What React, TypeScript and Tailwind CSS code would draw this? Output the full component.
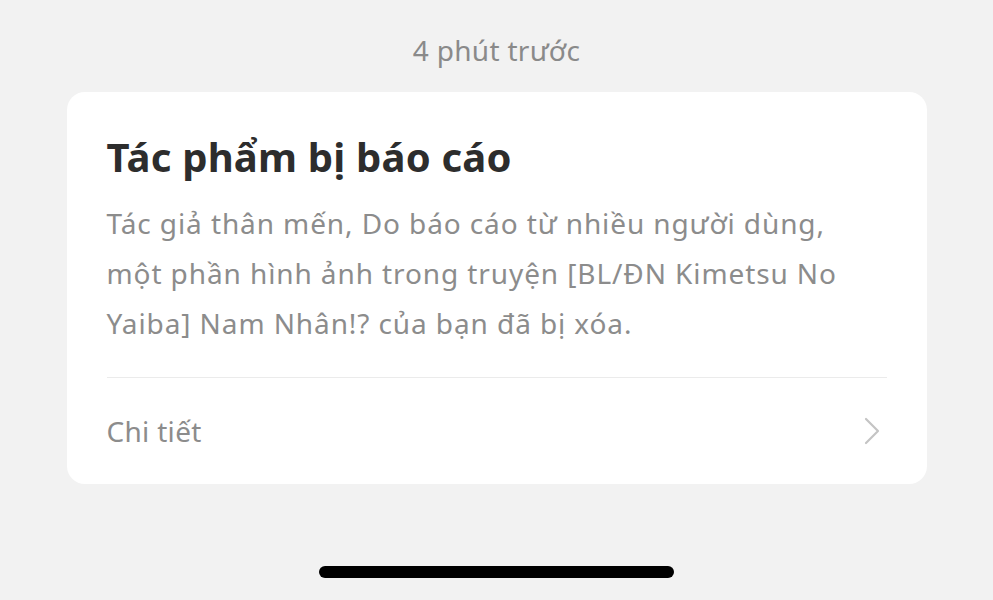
export default function App() {
  return (
    <div
      className="flex h-[600px] w-full flex-col items-center bg-[#f2f2f2]"
      style={{ fontFamily: '"Noto Sans", "Open Sans", sans-serif' }}
    >
      <div className="mt-[31px] text-[28px] leading-[38px] tracking-[0.3px] text-[#8a8a8a]">4 phút trước</div>

      <div className="mt-[23px] flex w-[860px] flex-col rounded-[18px] bg-white px-10">
        <h1 className="mt-[40px] text-[40px] font-bold leading-[50px] tracking-[0.2px] text-[#2d2d2d]">
          Tác phẩm bị báo cáo
        </h1>
        <p className="mt-[16px] text-[28px] leading-[50px] tracking-[0.9px] text-[#8c8c8c]">
          Tác giả thân mến, Do báo cáo từ nhiều người dùng,
          <br />
          một phần hình ảnh trong truyện [BL/ĐN Kimetsu No
          <br />
          Yaiba] Nam Nhân!? của bạn đã bị xóa.
        </p>
        <div className="mt-[29px] h-px w-full bg-[#ebebeb]" />
        <div className="flex h-[106px] items-center justify-between">
          <span className="text-[28px] tracking-[0.3px] text-[#8c8c8c]">Chi tiết</span>
          <svg width="18" height="30" viewBox="0 0 18 30" className="mr-[6px]">
            <path d="M3 3 L15 15 L3 27" fill="none" stroke="#c4c4c4" strokeWidth="2.2" strokeLinecap="round" strokeLinejoin="round" />
          </svg>
        </div>
      </div>

      <div className="mt-auto mb-[22px] h-[12px] w-[355px] rounded-full bg-black" />
    </div>
  );
}
